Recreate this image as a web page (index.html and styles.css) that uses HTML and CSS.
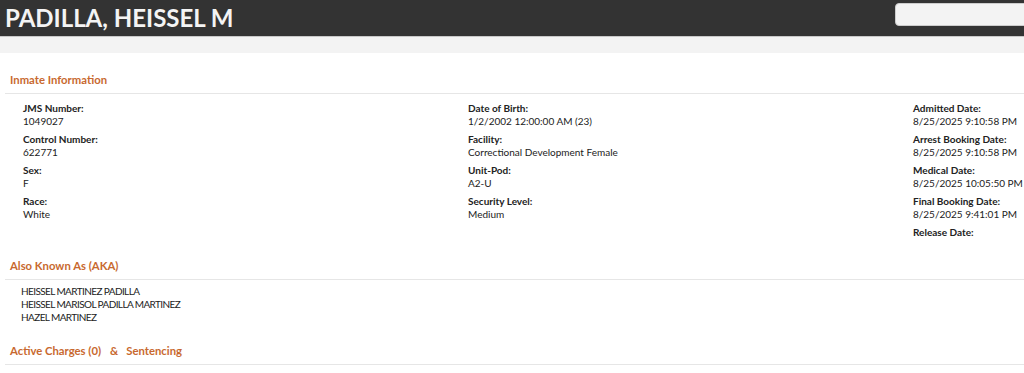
FILE: index.html
```html
<!DOCTYPE html>
<html lang="en">

<head>
    <meta charset="UTF-8">
    <meta name="viewport" content="width=device-width, initial-scale=1.0">
    <title>Inmate Details</title>

    <link rel="stylesheet" href="styles.css">
</head>

<body>
    <div class="topbar">
        <h1>PADILLA, HEISSEL M</h1>
        <input class="search" type="text">
    </div>
    <div class="subbar"></div>

    <div class="content">
        <div class="section-title">Inmate Information</div>
        <div class="info-grid">
            <div class="col">
                <div class="field"><div class="label">JMS Number:</div><div class="value">1049027</div></div>
                <div class="field"><div class="label">Control Number:</div><div class="value">622771</div></div>
                <div class="field"><div class="label">Sex:</div><div class="value">F</div></div>
                <div class="field"><div class="label">Race:</div><div class="value">White</div></div>
            </div>
            <div class="col">
                <div class="field"><div class="label">Date of Birth:</div><div class="value">1/2/2002 12:00:00 AM (23)</div></div>
                <div class="field"><div class="label">Facility:</div><div class="value">Correctional Development Female</div></div>
                <div class="field"><div class="label">Unit-Pod:</div><div class="value">A2-U</div></div>
                <div class="field"><div class="label">Security Level:</div><div class="value">Medium</div></div>
            </div>
            <div class="col">
                <div class="field"><div class="label">Admitted Date:</div><div class="value">8/25/2025 9:10:58 PM</div></div>
                <div class="field"><div class="label">Arrest Booking Date:</div><div class="value">8/25/2025 9:10:58 PM</div></div>
                <div class="field"><div class="label">Medical Date:</div><div class="value">8/25/2025 10:05:50 PM</div></div>
                <div class="field"><div class="label">Final Booking Date:</div><div class="value">8/25/2025 9:41:01 PM</div></div>
                <div class="field"><div class="label">Release Date:</div><div class="value"></div></div>
            </div>
        </div>

        <div class="section-title">Also Known As (AKA)</div>
        <div class="aka-list">
            <div>HEISSEL MARTINEZ PADILLA</div>
            <div>HEISSEL MARISOL PADILLA MARTINEZ</div>
            <div>HAZEL MARTINEZ</div>
        </div>

        <div class="section-title">Active Charges (0)<span class="amp">&amp;</span>Sentencing</div>
    </div>
</body>

</html>
```

FILE: styles.css
```css
* {
    box-sizing: border-box;
}

body {
    margin: 0;
    font-family: Lato, "Open Sans", sans-serif;
    color: #222;
    background-color: #fff;
}

.topbar {
    height: 37px;
    background-color: #333;
    border-bottom: 1px solid #c8c8c8;
    display: flex;
    justify-content: space-between;
    align-items: flex-start;
    overflow: hidden;
}

.topbar h1 {
    margin: 0;
    padding-left: 5px;
    font-size: 24px;
    font-weight: 700;
    line-height: 35px;
    color: #f4f4f4;
}

.search {
    width: 140px;
    height: 23px;
    margin-top: 3px;
    margin-right: -11px;
    border: 1px solid #ccc;
    border-radius: 4px;
    background-color: #f3f3f3;
}

.subbar {
    height: 16px;
    background-color: #f3f3f3;
}

.content {
    padding-left: 5px;
}

.section-title {
    padding: 20px 5px 6px;
    font-size: 11.3px;
    font-weight: 700;
    line-height: 14px;
    color: #c8692f;
    border-bottom: 1px solid #e6e6e6;
}

.amp {
    margin: 0 8px 0 9px;
}

.info-grid {
    display: grid;
    grid-template-columns: 445px 445px 1fr;
    padding: 8px 0 0 18px;
}

.field {
    margin-bottom: 5px;
    font-size: 10px;
    line-height: 13px;
}

.col .field:last-child {
    margin-bottom: 0;
}

.label {
    font-weight: 700;
}

.aka-list {
    padding: 5px 0 0 16px;
    font-size: 10px;
    line-height: 13px;
    letter-spacing: -0.6px;
}
```
